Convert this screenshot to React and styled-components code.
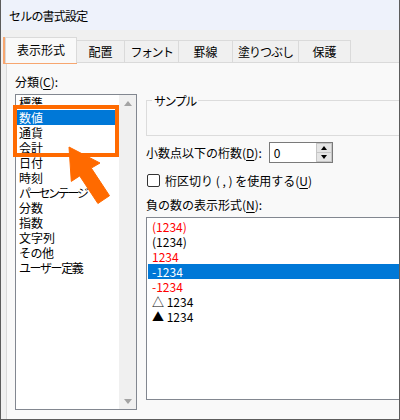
import React from 'react'
import styled, { createGlobalStyle } from 'styled-components'

const GlobalStyle = createGlobalStyle`
  body {
    margin: 0;
    background: #ffffff;
  }
  * {
    box-sizing: border-box;
  }
`

// kana in the original UI font is narrower than in Noto, so those rows get tighter tracking
const categories = [
  { label: '標準' },
  { label: '数値', selected: true },
  { label: '通貨' },
  { label: '会計' },
  { label: '日付' },
  { label: '時刻' },
  { label: 'パーセンテージ', spacing: -2.3 },
  { label: '分数' },
  { label: '指数' },
  { label: '文字列' },
  { label: 'その他', spacing: -0.5 },
  { label: 'ユーザー定義', spacing: -1.4 },
]

const negatives = [
  { text: '(1234)', red: true },
  { text: '(1234)' },
  { text: '1234', red: true },
  { text: '-1234', selected: true },
  { text: '-1234', red: true },
  { text: '△ 1234' },
  { text: '▲ 1234' },
]

const tabs = [
  { label: '表示形式', width: 72, active: true },
  { label: '配置', width: 49 },
  { label: 'フォント', width: 55, spacing: -1.5 },
  { label: '罫線', width: 55 },
  { label: '塗りつぶし', width: 67, spacing: -1 },
  { label: '保護', width: 53 },
]

const App = () => (
  <Root>
    <GlobalStyle />
    <Window>
      <TitleBar>セルの書式設定</TitleBar>
      <TabStrip>
        {tabs.map(t => (
          <Tab key={t.label} width={t.width} active={t.active} spacing={t.spacing}>
            {t.label}
          </Tab>
        ))}
      </TabStrip>
      <Panel>
        <LeftColumn>
          <FieldLabel>
            分類(<u>C</u>):
          </FieldLabel>
          <ListBox height={316}>
            <ListItems shift={0}>
              {categories.map(c => (
                <Item key={c.label} selected={c.selected} spacing={c.spacing}>{c.label}</Item>
              ))}
            </ListItems>
            <ScrollBar>
              <Arrow up />
              <Arrow />
            </ScrollBar>
          </ListBox>
        </LeftColumn>
        <RightColumn>
          <Sample>
            <legend>サンプル</legend>
          </Sample>
          <DecimalRow>
            小数点以下の桁数(<u>D</u>):
            <SpinInput>
              <span>0</span>
              <Spinner>
                <SpinButton><Tri up /></SpinButton>
                <SpinButton><Tri /></SpinButton>
              </Spinner>
            </SpinInput>
          </DecimalRow>
          <CheckRow>
            <CheckBox />
            <span>桁区切り ( , ) を使用する(<u>U</u>)</span>
          </CheckRow>
          <FieldLabel>
            負の数の表示形式(<u>N</u>):
          </FieldLabel>
          <ListBox height={183}>
            <ListItems shift={1}>
              {negatives.map((n, i) => (
                <NegItem key={i} red={n.red} selected={n.selected}>{n.text}</NegItem>
              ))}
            </ListItems>
          </ListBox>
        </RightColumn>
      </Panel>
    </Window>

    <TabMark />
    <GroupMark />
    <Pointer width="400" height="420" viewBox="0 0 400 420">
      <polygon
        points="69,147 100,163 91.3,168.1 109.5,195.7 97.9,203.5 79.7,175.9 71.3,181.4"
        fill="#ff6a00"
        stroke="#ff6a00"
        strokeWidth="1"
        strokeLinejoin="round"
      />
    </Pointer>
  </Root>
)

const Root = styled.div`
  position: relative;
  width: 400px;
  height: 420px;
  font-family: 'Noto Sans CJK JP', 'Noto Sans', sans-serif;
  font-size: 12px;
  color: #000;
`

const Window = styled.div`
  width: 400px;
  height: 420px;
  display: flex;
  flex-direction: column;
  background: #f0f0f0;
  border-left: 1px solid #5c5c5c;
  border-right: 1px solid #5c5c5c;
  border-bottom: 1px solid #5c5c5c;
  overflow: hidden;
`

const TitleBar = styled.div`
  height: 30px;
  flex: none;
  display: flex;
  align-items: center;
  padding-left: 8px;
  background: #eef2fb;
  line-height: 15px;
  letter-spacing: -0.8px;
`

const TabStrip = styled.div`
  height: 32px;
  flex: none;
  display: flex;
  align-items: flex-end;
  padding-left: 4px;
  position: relative;
  z-index: 1;
`

const Tab = styled.div`
  width: ${p => p.width}px;
  height: ${p => (p.active ? 26 : 22)}px;
  margin-left: -1px;
  margin-bottom: ${p => (p.active ? -1 : 0)}px;
  display: flex;
  align-items: center;
  justify-content: center;
  padding-bottom: ${p => (p.active ? 2 : 0)}px;
  background: ${p => (p.active ? '#f9f9f9' : '#f0f0f0')};
  border: 1px solid #dadada;
  border-bottom: none;
  line-height: 15px;
  letter-spacing: ${p => p.spacing || 0}px;

  &:first-child {
    margin-left: 0;
  }
`

const Panel = styled.div`
  flex: 1;
  display: flex;
  margin-left: 5px;
  padding: 11px 0 0 8px;
  background: #f9f9f9;
  border-left: 1px solid #dadada;
  border-top: 1px solid #dadada;
`

const LeftColumn = styled.div`
  width: 122px;
  flex: none;
  display: flex;
  flex-direction: column;
`

const RightColumn = styled.div`
  width: 270px;
  flex: none;
  margin-left: 9px;
  display: flex;
  flex-direction: column;
`

const FieldLabel = styled.div`
  height: 15px;
  line-height: 15px;
  margin-bottom: 5px;

  u {
    text-underline-offset: 2px;
  }
`

const ListBox = styled.div`
  height: ${p => p.height}px;
  display: flex;
  background: #ffffff;
  border: 1px solid #828790;
  overflow: hidden;
`

const ListItems = styled.div`
  flex: 1;
  margin-top: ${p => p.shift}px;
`

const Item = styled.div`
  height: 15px;
  line-height: 15px;
  margin: 0 3px 0 1px;
  padding-left: 2px;
  white-space: nowrap;
  letter-spacing: ${p => p.spacing || 0}px;
  background: ${p => (p.selected ? '#0078d7' : 'transparent')};
  color: ${p => (p.selected ? '#ffffff' : '#000000')};
`

const NegItem = styled(Item)`
  margin: 0 0 0 1px;
  padding-left: 4px;
  color: ${p => (p.selected ? '#ffffff' : p.red ? '#ff0000' : '#000000')};
`

const ScrollBar = styled.div`
  width: 17px;
  flex: none;
  display: flex;
  flex-direction: column;
  justify-content: space-between;
  align-items: center;
  padding: 6px 0 5px;
  background: #f0f0f0;
`

const Arrow = styled.div`
  width: 0;
  height: 0;
  border-left: 4px solid transparent;
  border-right: 4px solid transparent;
  ${p => (p.up
    ? 'border-bottom: 5px solid #a3a3a3;'
    : 'border-top: 5px solid #a3a3a3;')}
`

const Sample = styled.fieldset`
  margin: 19px 0 0;
  padding: 0;
  height: 43px;
  border: 1px solid #dcdcdc;

  legend {
    margin-left: 5px;
    padding: 0 2px;
    line-height: 15px;
    letter-spacing: -1.5px;
  }
`

const DecimalRow = styled.div`
  margin-top: 6px;
  height: 21px;
  display: flex;
  align-items: center;
  line-height: 15px;

  u {
    text-underline-offset: 2px;
  }
`

const SpinInput = styled.div`
  width: 64px;
  height: 21px;
  margin-left: 7px;
  display: flex;
  align-items: center;
  justify-content: space-between;
  padding-left: 4px;
  background: #ffffff;
  border: 1px solid #7a7a7a;
`

const Spinner = styled.div`
  width: 16px;
  height: 19px;
  display: flex;
  flex-direction: column;
`

const SpinButton = styled.div`
  flex: 1;
  display: flex;
  align-items: center;
  justify-content: center;
  background: #e5e5e5;
  border: 1px solid #c6c6c6;

  & + & {
    border-top: none;
  }
`

const Tri = styled.div`
  width: 0;
  height: 0;
  border-left: 3.5px solid transparent;
  border-right: 3.5px solid transparent;
  ${p => (p.up
    ? 'border-bottom: 4px solid #000;'
    : 'border-top: 4px solid #000;')}
`

const CheckRow = styled.div`
  margin-top: 10px;
  height: 15px;
  display: flex;
  align-items: center;
  gap: 5px;
  line-height: 15px;
  margin-bottom: 9px;

  u {
    text-underline-offset: 2px;
  }
`

const CheckBox = styled.span`
  width: 13px;
  height: 13px;
  margin-left: 1px;
  background: #ffffff;
  border: 1px solid #333333;
  border-radius: 2px;
`

const TabMark = styled.div`
  position: absolute;
  left: 3px;
  top: 37px;
  width: 74px;
  height: 27px;
  border: 3px solid #f7a66f;
  pointer-events: none;
`

const GroupMark = styled.div`
  position: absolute;
  left: 13px;
  top: 105px;
  width: 106px;
  height: 52px;
  border: 4px solid #ff6a00;
  pointer-events: none;
`

const Pointer = styled.svg`
  position: absolute;
  left: 0;
  top: 0;
  pointer-events: none;
`

export default App
